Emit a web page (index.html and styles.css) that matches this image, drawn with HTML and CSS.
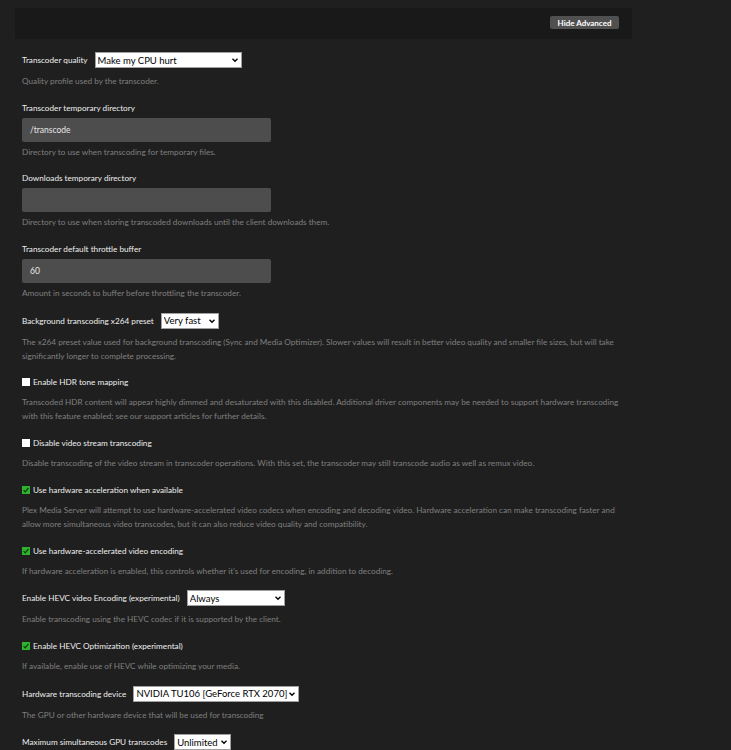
FILE: index.html
```html
<!DOCTYPE html>
<html lang="en">
<head>
    <meta charset="UTF-8">
    <title>Transcoder Settings</title>
    <link rel="stylesheet" href="styles.css">
</head>
<body>
    <div class="page">
        <div class="toolbar">
            <button class="toggle-btn">Hide Advanced</button>
        </div>

        <div class="settings">
            <div class="setting">
                <div class="row">
                    <label>Transcoder quality</label>
                    <select class="w-quality"><option>Make my CPU hurt</option></select>
                </div>
                <p class="desc">Quality profile used by the transcoder.</p>
            </div>

            <div class="setting">
                <label class="block">Transcoder temporary directory</label>
                <input type="text" class="text-input" value="/transcode">
                <p class="desc tight">Directory to use when transcoding for temporary files.</p>
            </div>

            <div class="setting">
                <label class="block">Downloads temporary directory</label>
                <input type="text" class="text-input" value="">
                <p class="desc tight">Directory to use when storing transcoded downloads until the client downloads them.</p>
            </div>

            <div class="setting">
                <label class="block">Transcoder default throttle buffer</label>
                <input type="text" class="text-input" value="60">
                <p class="desc tight">Amount in seconds to buffer before throttling the transcoder.</p>
            </div>

            <div class="setting">
                <div class="row">
                    <label>Background transcoding x264 preset</label>
                    <select class="w-preset"><option>Very fast</option></select>
                </div>
                <p class="desc">The x264 preset value used for background transcoding (Sync and Media Optimizer). Slower values will result in better video quality and smaller file sizes, but will take significantly longer to complete processing.</p>
            </div>

            <div class="setting">
                <div class="row">
                    <span class="check"></span>
                    <label>Enable HDR tone mapping</label>
                </div>
                <p class="desc">Transcoded HDR content will appear highly dimmed and desaturated with this disabled. Additional driver components may be needed to support hardware transcoding with this feature enabled; see our support articles for further details.</p>
            </div>

            <div class="setting">
                <div class="row">
                    <span class="check"></span>
                    <label>Disable video stream transcoding</label>
                </div>
                <p class="desc">Disable transcoding of the video stream in transcoder operations. With this set, the transcoder may still transcode audio as well as remux video.</p>
            </div>

            <div class="setting">
                <div class="row">
                    <span class="check checked"><svg viewBox="0 0 8 8"><path d="M1.6 4.2 L3.2 5.8 L6.4 2" /></svg></span>
                    <label>Use hardware acceleration when available</label>
                </div>
                <p class="desc">Plex Media Server will attempt to use hardware-accelerated video codecs when encoding and decoding video. Hardware acceleration can make transcoding faster and allow more simultaneous video transcodes, but it can also reduce video quality and compatibility.</p>
            </div>

            <div class="setting">
                <div class="row">
                    <span class="check checked"><svg viewBox="0 0 8 8"><path d="M1.6 4.2 L3.2 5.8 L6.4 2" /></svg></span>
                    <label>Use hardware-accelerated video encoding</label>
                </div>
                <p class="desc">If hardware acceleration is enabled, this controls whether it's used for encoding, in addition to decoding.</p>
            </div>

            <div class="setting">
                <div class="row">
                    <label>Enable HEVC video Encoding (experimental)</label>
                    <select class="w-hevc"><option>Always</option></select>
                </div>
                <p class="desc">Enable transcoding using the HEVC codec if it is supported by the client.</p>
            </div>

            <div class="setting">
                <div class="row">
                    <span class="check checked"><svg viewBox="0 0 8 8"><path d="M1.6 4.2 L3.2 5.8 L6.4 2" /></svg></span>
                    <label>Enable HEVC Optimization (experimental)</label>
                </div>
                <p class="desc">If available, enable use of HEVC while optimizing your media.</p>
            </div>

            <div class="setting">
                <div class="row">
                    <label>Hardware transcoding device</label>
                    <select class="w-device"><option>NVIDIA TU106 [GeForce RTX 2070]</option></select>
                </div>
                <p class="desc">The GPU or other hardware device that will be used for transcoding</p>
            </div>

            <div class="setting">
                <div class="row">
                    <label>Maximum simultaneous GPU transcodes</label>
                    <select class="w-max"><option>Unlimited</option></select>
                </div>
            </div>
        </div>
    </div>
</body>
</html>
```

FILE: styles.css
```css
body {
    margin: 0;
    padding: 0;
    background-color: #1f1f1f;
    font-family: Lato, "Noto Sans", sans-serif;
    color: #eeeeee;
}
.page {
    width: 617px;
    margin-left: 15px;
    padding-top: 8px;
}
.toolbar {
    height: 31px;
    background-color: #191919;
    display: flex;
    align-items: center;
    justify-content: flex-end;
    padding-right: 13px;
}
.toggle-btn {
    background-color: #505050;
    color: #ffffff;
    border: none;
    border-radius: 2px;
    font-family: Lato, sans-serif;
    font-weight: bold;
    font-size: 8px;
    height: 13px;
    width: 69px;
    padding: 0;
    margin-top: -2px;
}
.settings {
    padding: 13px 10px 0 7px;
}
.setting {
    margin-bottom: 12.7px;
}
.row {
    display: flex;
    align-items: center;
    min-height: 14px;
}
label {
    font-size: 8.2px;
    line-height: 14px;
    color: #eeeeee;
}
label.block {
    display: block;
}
.row select {
    margin-left: 7px;
}
select {
    appearance: none;
    -webkit-appearance: none;
    height: 16px;
    box-sizing: border-box;
    border: 1px solid #a0a0a0;
    border-radius: 0;
    background-color: #ffffff;
    background-image: url("data:image/svg+xml;utf8,<svg xmlns='http://www.w3.org/2000/svg' width='8' height='8' viewBox='0 0 8 8'><path d='M1.5 2.8 L4 5.2 L6.5 2.8' fill='none' stroke='black' stroke-width='1.4'/></svg>");
    background-repeat: no-repeat;
    background-position: right 2px center;
    color: #000000;
    font-family: Lato, sans-serif;
    font-size: 9.5px;
    padding: 0 9px 0 2px;
}
.w-quality { width: 147px; }
.w-preset { width: 58px; }
.w-hevc { width: 98px; }
.w-device { width: 166px; }
.w-max { width: 57px; }
.text-input {
    display: block;
    margin-top: 3px;
    width: 249px;
    height: 24px;
    box-sizing: border-box;
    border: none;
    border-radius: 2px;
    background-color: #4d4d4d;
    color: #e6e6e6;
    font-family: Lato, sans-serif;
    font-size: 8.5px;
    padding: 0 8px;
}
.desc {
    margin: 6px 0 0 0;
    font-size: 8.2px;
    line-height: 14px;
    color: #7f7f7f;
}
.desc.tight {
    margin-top: 3px;
}
.check {
    width: 8px;
    height: 8px;
    background-color: #ffffff;
    margin-right: 3px;
    display: inline-block;
    flex-shrink: 0;
}
.check svg {
    display: block;
    width: 8px;
    height: 8px;
}
.check.checked {
    background-color: #2fb32f;
}
.check.checked path {
    fill: none;
    stroke: #0c3a0c;
    stroke-width: 1.2;
}
```
